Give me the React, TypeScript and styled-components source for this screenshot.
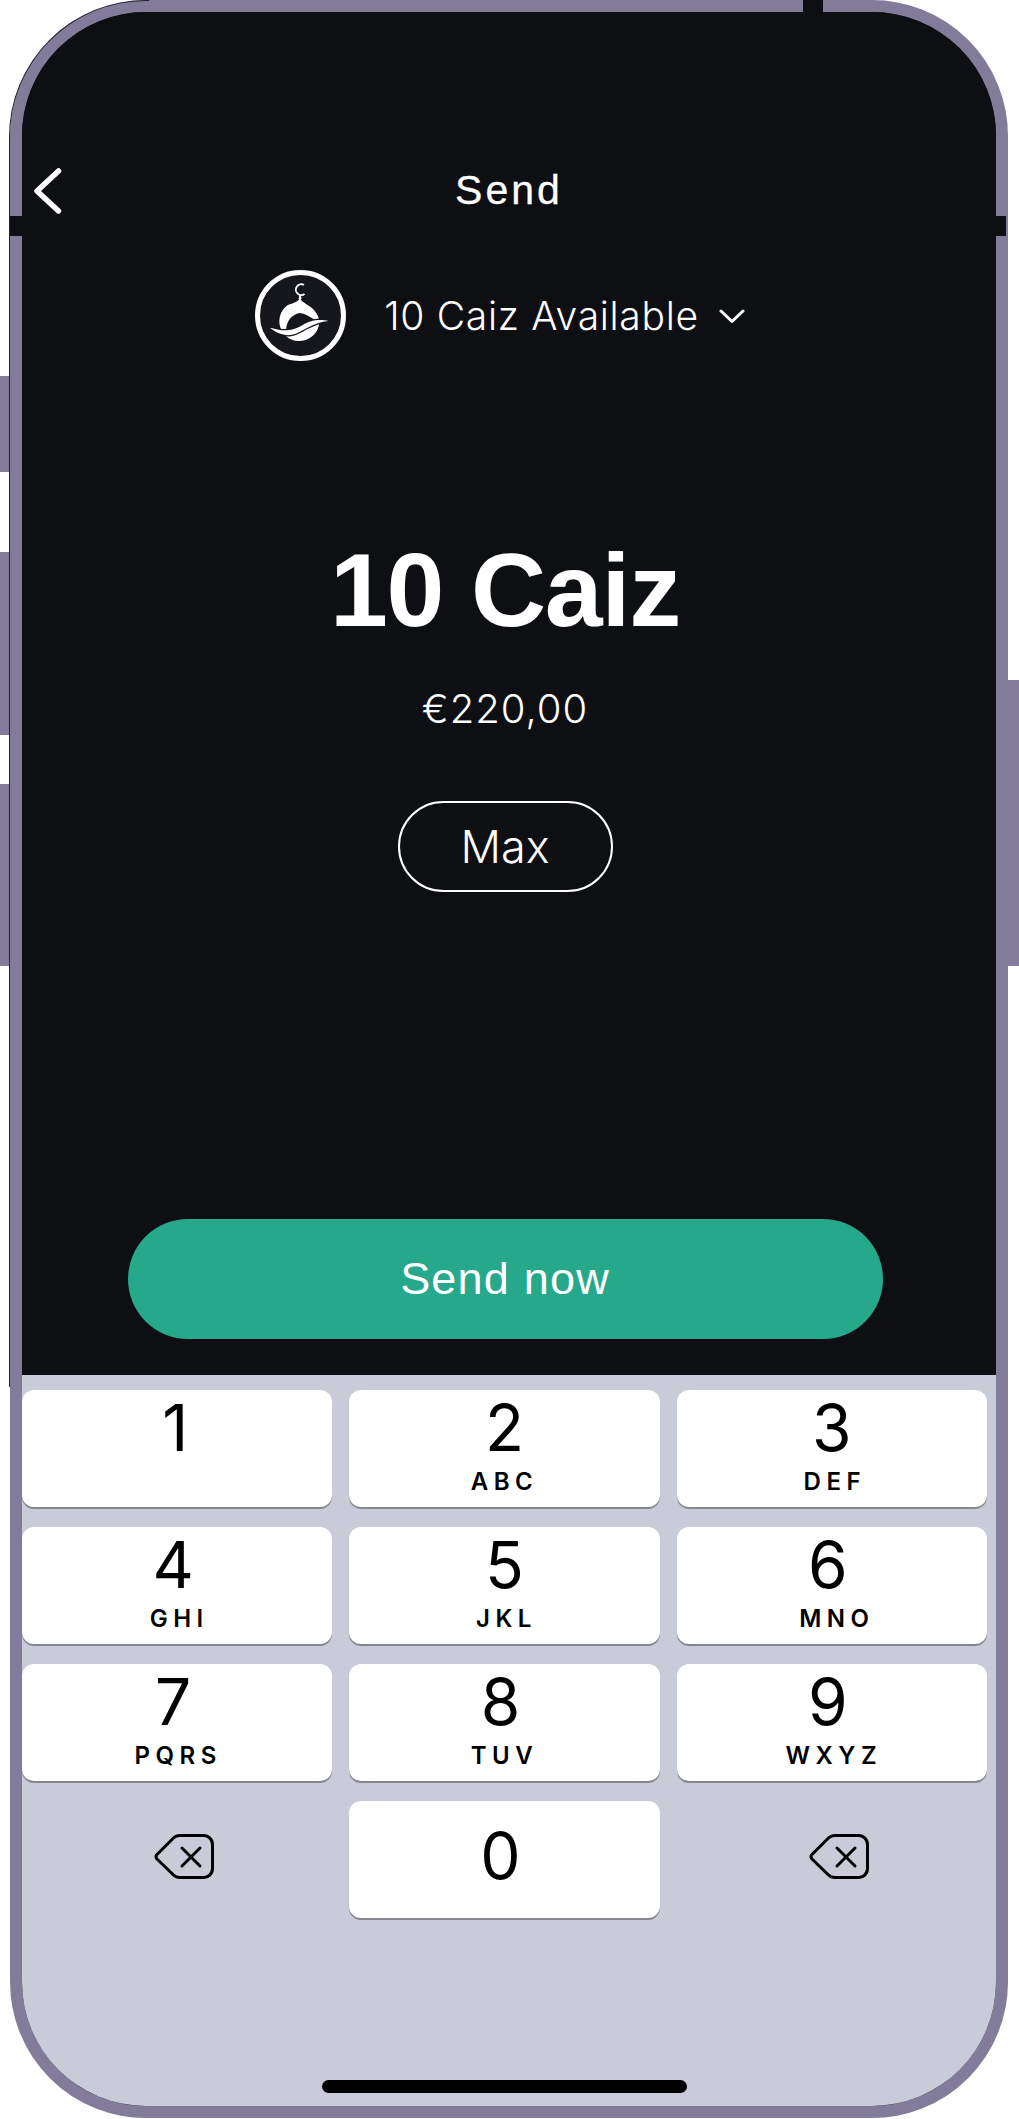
import styled, { createGlobalStyle } from "styled-components";

const GlobalStyle = createGlobalStyle`
  html, body {
    margin: 0;
    padding: 0;
    background: #ffffff;
    font-family: "Liberation Sans", Arial, sans-serif;
  }
`;

const Page = styled.div`
  position: relative;
  width: 1019px;
  height: 2119px;
  overflow: hidden;
  padding-left: 10px;
  box-sizing: border-box;
`;
const SideButton = styled.div<{ $top: number; $height: number; $right?: boolean }>`
  position: absolute;
  top: ${(p) => p.$top}px;
  height: ${(p) => p.$height}px;
  width: 11px;
  background: #827c9a;
  ${(p) => (p.$right ? "right: 0;" : "left: 0;")}
`;
const Frame = styled.div`
  position: relative;
  width: 998px;
  height: 2118px;
  box-sizing: border-box;
  border: 12px solid #827c9a;
  border-radius: 136px;
  background: #0e0f13;
  &::before {
    content: "";
    position: absolute;
    top: -12px;
    left: -13px;
    width: 140px;
    height: 1387px;
    border-left: 1px solid #23232b;
    border-top: 1px solid #23232b;
    border-top-left-radius: 137px;
    box-sizing: border-box;
    clip-path: polygon(0 0, 100% 0, 100% 2px, 2px 137px, 2px 100%, 0 100%);
  }
`;
const Notch = styled.div<{ $side: "left" | "right" | "top" }>`
  position: absolute;
  background: #0e0f13;
  ${(p) =>
    p.$side === "top"
      ? "top: -12px; left: 781px; width: 20px; height: 12px;"
      : `top: 204px; height: 20px; width: ${p.$side === "left" ? 12 : 10}px; ${p.$side}: ${p.$side === "left" ? -12 : -10}px;`}
`;
const Screen = styled.div`
  display: flex;
  flex-direction: column;
  height: 100%;
  border-radius: 124px;
  overflow: hidden;
`;
const Dark = styled.section`
  height: 1363px;
  flex: none;
  display: flex;
  flex-direction: column;
  align-items: center;
  padding: 145px 8px 36px 0;
  box-sizing: border-box;
  background: #0e0f13;
  color: #ffffff;
`;
const Header = styled.header`
  width: 100%;
  display: grid;
  grid-template-columns: 1fr auto 1fr;
  align-items: center;
  height: 66px;
  padding-left: 12px;
  box-sizing: border-box;
`;
const BackIcon = styled.svg`
  width: 30px;
  height: 50px;
  display: block;
`;
const Title = styled.h1`
  margin: 0 4px 0 0;
  font-size: 41px;
  font-weight: 400;
  letter-spacing: 3px;
  -webkit-text-stroke: 0.3px #ffffff;
`;
const Selector = styled.div`
  display: flex;
  align-items: center;
  margin-top: 47px;
  padding-right: 10px;
`;
const Logo = styled.svg`
  width: 91px;
  height: 91px;
  display: block;
`;
const Available = styled.span`
  margin-left: 38px;
  font-family: Inter, sans-serif;
  font-weight: 300;
  font-size: 39px;
  letter-spacing: 0.7px;
  line-height: 46px;
`;
const Chevron = styled.svg`
  width: 26px;
  height: 16px;
  margin-left: 20px;
  display: block;
`;
const Amount = styled.div`
  margin-top: 169px;
  font-size: 104px;
  line-height: 120px;
  font-weight: 700;
  letter-spacing: -1.2px;
`;
const Fiat = styled.div`
  margin-top: 34px;
  font-family: Inter, sans-serif;
  font-weight: 300;
  font-size: 40px;
  letter-spacing: 1px;
  line-height: 50px;
`;
const MaxButton = styled.button`
  margin-top: 67px;
  width: 215px;
  height: 91px;
  border: 2.5px solid #ffffff;
  border-radius: 46px;
  background: transparent;
  color: #ffffff;
  font-family: Inter, sans-serif;
  font-weight: 300;
  font-size: 45px;
  padding: 0;
`;
const SendButton = styled.button`
  margin-top: auto;
  width: 755px;
  height: 120px;
  border: 0;
  border-radius: 60px;
  background: #26a88a;
  color: #ffffff;
  font-family: inherit;
  font-size: 45px;
  letter-spacing: 1.2px;
  padding: 0;
`;
const Keyboard = styled.section`
  flex: 1;
  position: relative;
  background: #c9ccd8;
  padding: 15px 9px 0 0;
`;
const KeyGrid = styled.div`
  display: grid;
  grid-template-columns: repeat(3, 1fr);
  grid-auto-rows: 117px;
  column-gap: 17px;
  row-gap: 20px;
`;
const Key = styled.div`
  display: flex;
  flex-direction: column;
  align-items: center;
  background: #ffffff;
  border-radius: 12px;
  box-shadow: 0 2px 0 #85868e;
  color: #000000;
`;
const Digit = styled.span<{ $shift: number }>`
  font-family: Inter, sans-serif;
  font-size: 64px;
  font-weight: 400;
  line-height: 72px;
  margin-top: 2px;
  transform: translateX(${(p) => p.$shift}px);
`;
const Letters = styled.span<{ $shift: number }>`
  font-family: Inter, sans-serif;
  font-size: 24px;
  font-weight: 600;
  letter-spacing: 5.5px;
  line-height: 28px;
  margin-top: 4px;
  transform: translateX(${(p) => p.$shift}px);
`;
const ZeroKey = styled(Key)`
  justify-content: center;
  ${Digit} {
    margin-top: -8px;
  }
`;
const DeleteCell = styled.div`
  display: flex;
  align-items: flex-start;
  justify-content: center;
  padding: 33px 0 0 14px;
`;
const DeleteIcon = styled.svg`
  width: 60px;
  height: 45px;
  display: block;
`;
const HomeBar = styled.div`
  position: absolute;
  left: 300px;
  bottom: 13px;
  width: 365px;
  height: 13px;
  border-radius: 7px;
  background: #000000;
`;

const keys = [
  { digit: "1", letters: "", shift: -2, lettersShift: 0 },
  { digit: "2", letters: "ABC", shift: 0, lettersShift: 0 },
  { digit: "3", letters: "DEF", shift: 0, lettersShift: 3 },
  { digit: "4", letters: "GHI", shift: -4, lettersShift: 2 },
  { digit: "5", letters: "JKL", shift: 0, lettersShift: 2 },
  { digit: "6", letters: "MNO", shift: -4, lettersShift: 5 },
  { digit: "7", letters: "PQRS", shift: -4, lettersShift: 1 },
  { digit: "8", letters: "TUV", shift: -4, lettersShift: 0 },
  { digit: "9", letters: "WXYZ", shift: -4, lettersShift: 2 },
];

const Backspace = () => (
  <DeleteIcon viewBox="0 0 60 45" fill="none" stroke="#000" strokeWidth="3" strokeLinejoin="round" strokeLinecap="round">
    <path d="M3 20.5 L19.5 4 Q22 1.5 26 1.5 H49 A9 9 0 0 1 58.5 10.5 V34.5 A9 9 0 0 1 49 43.5 H26 Q22 43.5 19.5 41 L3 25 Q1 22.5 3 20.5 Z" />
    <path d="M28 14 L46 32 M46 14 L28 32" />
  </DeleteIcon>
);

export default function App() {
  return (
    <Page>
      <GlobalStyle />
      <SideButton $top={376} $height={96} />
      <SideButton $top={552} $height={183} />
      <SideButton $top={784} $height={182} />
      <SideButton $right $top={680} $height={286} />
      <Frame>
        <Notch $side="left" />
        <Notch $side="right" />
        <Notch $side="top" />
        <Screen>
          <Dark>
            <Header>
              <BackIcon viewBox="0 0 30 50" fill="none" stroke="#fff" strokeWidth="5.5" strokeLinecap="round" strokeLinejoin="round">
                <path d="M24.5 6 L3 26 L24.5 46" />
              </BackIcon>
              <Title>Send</Title>
            </Header>
            <Selector>
              <Logo viewBox="0 0 91 91">
                <circle cx="45.5" cy="45.5" r="43" fill="#16171c" stroke="#fff" strokeWidth="5" />
                <path fill="none" stroke="#fff" strokeWidth="1.8" d="M49 15 A5.4 5.4 0 1 0 49.5 24" />
                <path fill="#fff" d="M44.3 25 h1.6 l.6 4 h-2.8 Z" />
                <path fill="#fff" d="M45 28 C47 33 53 34 58 39 C63 44 65 50 64 55 C62 65 53 71 44 71 C34 71 26 64 24.5 54 C23.5 45 28 38 33 35 C38 33 43 32 45 28 Z" />
                <path fill="#16171c" d="M31 61 C31 50 38 44 45 43 C51 44 56 47 61 51 L50 58 Z" />
                <path fill="#fff" stroke="#16171c" strokeWidth="2.5" paintOrder="stroke" d="M15 57.7 C22 59.5 27 60.5 32 60.3 C38 60 42 58 46 56 C51 53 56 50.5 62 50 C66 49.8 70 50 73.5 51 C66 51.5 60 54 52 58 C46 61 42 64 36 65 C28 66 20 62 15 57.7 Z" />
              </Logo>
              <Available>10 Caiz Available</Available>
              <Chevron viewBox="0 0 26 16" fill="none" stroke="#fff" strokeWidth="3" strokeLinecap="round" strokeLinejoin="round">
                <path d="M2 3 L13 13.5 L24 3" />
              </Chevron>
            </Selector>
            <Amount>10 Caiz</Amount>
            <Fiat>€220,00</Fiat>
            <MaxButton>Max</MaxButton>
            <SendButton>Send now</SendButton>
          </Dark>
          <Keyboard>
            <KeyGrid>
              {keys.map((k) => (
                <Key key={k.digit}>
                  <Digit $shift={k.shift}>{k.digit}</Digit>
                  <Letters $shift={k.lettersShift}>{k.letters}</Letters>
                </Key>
              ))}
              <DeleteCell>
                <Backspace />
              </DeleteCell>
              <ZeroKey>
                <Digit $shift={-4}>0</Digit>
              </ZeroKey>
              <DeleteCell>
                <Backspace />
              </DeleteCell>
            </KeyGrid>
            <HomeBar />
          </Keyboard>
        </Screen>
      </Frame>
    </Page>
  );
}
